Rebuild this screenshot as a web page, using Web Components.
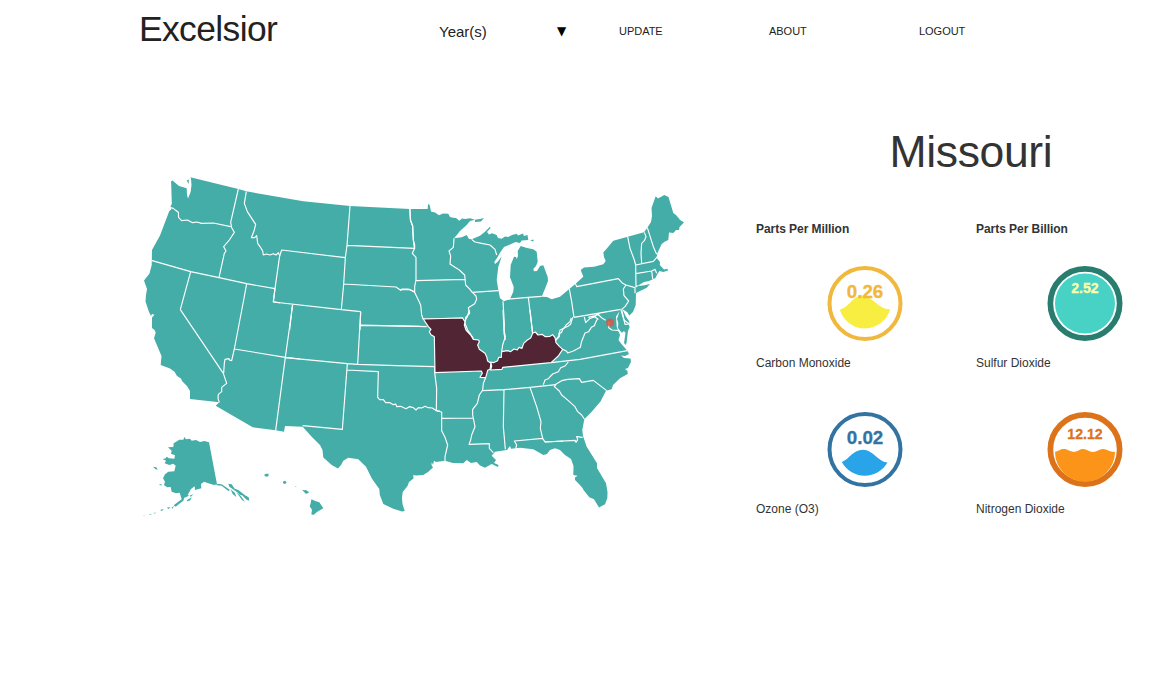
<!DOCTYPE html>
<html lang="en"><head><meta charset="utf-8"><title>Excelsior</title>
<style>html,body{margin:0;height:100%;background:#fff;overflow:hidden}body{font-family:"Liberation Sans",Arial,sans-serif;color:#333}</style></head>
<body><excelsior-app></excelsior-app>
<script>
const define=(name,html,setup)=>customElements.define(name,class extends HTMLElement{
  constructor(){super();this.attachShadow({mode:'open'});}
  connectedCallback(){const t=document.createElement('template');t.innerHTML=typeof html==='function'?html(this):html;this.shadowRoot.replaceChildren(t.content.cloneNode(true));}
});

define('nav-link',`<style>:host{display:block;width:150px;font-size:11px;line-height:14px;color:#222;letter-spacing:-.03px}</style><slot></slot>`);
define('year-select',`<style>:host{display:flex;width:180px;align-items:center;font-size:15px;line-height:18px;color:#222}
 .l{width:118px;padding-top:1px}.a{font:12px/14px "DejaVu Sans",sans-serif;color:#000}</style><span class="l"><slot></slot></span><span class="a">▼</span>`);
define('app-header',`<style>:host{display:flex;height:62px;padding-left:139px;box-sizing:border-box;align-items:center}
 h1{margin:0 0 4px;width:300px;font-weight:400;font-size:35.4px;line-height:40px;color:#222;letter-spacing:-.6px}</style>
 <h1>Excelsior</h1><year-select>Year(s)</year-select><nav-link>UPDATE</nav-link><nav-link>ABOUT</nav-link><nav-link>LOGOUT</nav-link>`);

const waves={
 co:'M-25.2 6C-17 5-12-8-3-8C7-8 15 7 25.2 5.8A26.2 26.2 0 0 1-25.2 6Z',
 o3:'M-23.2 12.5C-15 9-12 .2-2 .2C8 .2 14 13 22.5 13A26.2 26.2 0 0 1-23.2 12.5Z',
 so2:'M-30 0A30 30 0 1 1 30 0A30 30 0 1 1-30 0Z',
 no2:'M-30 2.2C-26 1.5-25-.6-21-.6C-17-.6-15 2.2-11 2.2C-7 2.2-6-.6-2-.6C2-.6 4 2.4 8 2.4C12 2.4 14-.6 18-.6C22-.6 24 2.4 30 2.4A30 30 0 0 1-30 2.2Z'};
define('liquid-gauge',el=>{const a=n=>el.getAttribute(n),w=+a('ring');return `<style>:host{display:block;width:76px;height:76px}svg{display:block}text{font-weight:bold;text-anchor:middle}</style>
 <svg width="76" height="76" viewBox="-38 -38.5 76 76"><circle r="${37.5-w/2}" fill="none" stroke="${a('color')}" stroke-width="${w}"/>
 <path d="${waves[a('wave')]}" fill="${a('fill')}"/><text x="0" y="${a('ty')}" font-size="${a('size')}" fill="${a('ink')}" stroke="${a('ink')}" stroke-width=".3">${el.textContent}</text></svg>`});
define('reading-card',`<style>:host{display:flex;flex-direction:column;height:146px;font-size:12px;line-height:14px}
 .g{padding-left:71px;height:91px}</style><div class="g"><slot name="gauge"></slot></div><slot></slot>`);
define('reading-column',`<style>:host{display:block;width:220px}h2{margin:0 0 29px;font-size:12px;line-height:14px;font-weight:bold;letter-spacing:-.05px}</style><h2><slot name="title"></slot></h2><slot></slot>`);
define('state-panel',`<style>:host{display:block;flex:none;width:440px;padding-top:64px}h1{margin:0;padding-left:133.5px;font-size:44.5px;line-height:52px;font-weight:400;height:96px;box-sizing:border-box;letter-spacing:-.35px}
 .cols{display:flex}</style><h1>Missouri</h1><div class="cols">
 <reading-column><span slot="title">Parts Per Million</span>
 <reading-card><liquid-gauge slot="gauge" ring="4" color="#f0b83c" fill="#f8ee42" ink="#f0b83c" wave="co" ty="-5.8" size="18.8">0.26</liquid-gauge>Carbon Monoxide</reading-card>
 <reading-card><liquid-gauge slot="gauge" ring="4" color="#3273a2" fill="#2aa4e8" ink="#3273a2" wave="o3" ty="-5.8" size="18.8">0.02</liquid-gauge>Ozone (O3)</reading-card></reading-column>
 <reading-column><span slot="title">Parts Per Billion</span>
 <reading-card><liquid-gauge slot="gauge" ring="5.7" color="#287d6e" fill="#48d1c5" ink="#ffffa6" wave="so2" ty="-10.6" size="14.1">2.52</liquid-gauge>Sulfur Dioxide</reading-card>
 <reading-card><liquid-gauge slot="gauge" ring="5.7" color="#dc731a" fill="#fb9419" ink="#dc731a" wave="no2" ty="-10.6" size="14.1">12.12</liquid-gauge>Nitrogen Dioxide</reading-card></reading-column></div>`);

/* Border lines are grouped by region, three units to a pixel. */
const regions=[
 [130,165,`M121,128 130,130 137,136 145,142 146,158 155,167 172,165 188,173 200,171 215,175 250,174 302,185M325,72 302,172 305,188 313,202 298,225 281,245 288,258 283,265 267,338M64,286 182,320 267,338 350,356 435,371M182,320 151,434M350,356 341,405M349,79 343,115 352,140 377,178 372,198 364,218 374,218 380,212 383,235 392,248 398,258 400,270 410,267 420,270 430,266 438,270 445,263 449,272 435,371 430,410 450,414`],
 [270,180,`M29,228 35,210 226,233M15,325 10,366 214,389 272,395M240,78 231,196 226,233 221,312 214,389M231,196 434,205M420,87 421,120 428,138 430,180 434,195 434,205 427,220 438,232 438,300 434,320 434,337M221,312 378,321 392,331 396,327 415,327 425,331 434,337M67,376 59,450M272,395 270,450M271,436 450,439`],
 [400,190,`M29,57 32,92 38,108 40,150 43,175M162,145 160,172 147,183 152,198 150,222 165,232 178,240 194,255 197,285 210,298 215,305 228,318 230,328 224,341 205,353 209,370 197,382 195,400 203,420 220,445M48,272 195,268M69,387 190,384M215,307 295,302M215,148 225,156 245,160 270,165 285,178 290,195M309,334 313,400 312,430 316,450M318,328 385,322 425,319M385,322 398,430M0,299 28,299 43,305 55,330 62,345 65,375 69,387`],
 [540,185,`M102,397 242,373M133,396 137,413 150,400 163,396 173,387 187,400 197,406M155,396 170,390 180,385M88,312 95,350 102,397M94,399 90,410 78,420 72,430 60,435 57,450M105,292 110,305 235,281 248,295 258,300 250,312 252,332 266,348 255,365 245,373M258,300 285,308 285,325M263,155 270,190 283,225 287,240 288,305 293,302M313,142 318,155 313,167 305,175 303,205 305,235M287,240 340,229 352,215M322,128 340,185 350,208M287,266 335,258 345,253 350,265M335,258 338,282M245,373 255,418 270,417M207,410 206,428 216,435 235,436 245,445`],
 [130,300,`M151,29 280,220 290,250 275,262 275,275 265,283 264,295 268,307M341,0 313,147 305,182 298,180 297,176 285,178 283,190 281,220M313,147 466,172 510,177M466,172 437,391M488,15 466,172`],
 [280,300,`M16,173 202,191 233,193 350,197 464,200M242,35 233,193M242,75 440,80M202,191 187,388 68,377M201,210 295,215 293,292 299,299 310,299 317,308 330,308 340,314 347,312 350,320 362,319 378,326 388,320 400,323 408,330 415,323 425,324 435,319 445,323 457,324 469,332 480,333M464,200 464,218 470,265 469,332`],
 [420,310,`M50,303 65,306 65,325 159,324M65,325 65,362 75,382 83,405 75,440 75,455M197,203 190,220 188,240 178,255 172,280 158,298 158,315 165,350 155,375 152,390 147,403 208,401 208,415 220,428M188,242 252,239 330,232 408,224M252,239 250,350 256,418M330,232 350,290 363,335 361,355 368,385 283,393 290,405 287,417M368,385 375,396 430,393M249,0 252,60 256,80 248,105 245,125M330,0 338,72M148,0 142,20 135,32M420,72 408,90`],
 [520,310,`M75,396 165,391 168,397 173,389 170,380 188,382M70,224 75,210 85,206 98,192 115,185 122,173 135,168 145,156M108,223 103,230 118,243 125,255 145,272 165,290 173,305 185,315 193,327M105,224 125,212 143,208 178,206 185,217 220,211 260,242M93,158 180,148 322,122M128,118 140,124 143,129 160,123 181,112 184,97 195,69 206,65 214,52 223,47 230,30 235,28M158,22 152,42 144,49 130,55 124,68 117,70 118,80 108,90M235,28 220,18 205,22M303,0 312,30 328,42M328,42 330,50`]];
define('us-map',`<style>:host{display:block;width:560px;height:350px}svg{display:block}.land{fill:#44ada8}.b{fill:none;stroke:#fff;stroke-width:1.15;stroke-linejoin:round;vector-effect:non-scaling-stroke}.b.hot{fill:#522534}</style>
<svg width="560" height="350" viewBox="140 170 560 350"><g class="land">
<path d="M190.3,177.3 238.3,189 246.3,191.3 270,195.5 303.3,201.3 350,206 410,209 427.7,209 428,204.3 429.5,204.5 431,211.5 435,212.5 439,215.3 443,213.5 448.3,213.7 450,217 453,217.7 456,218 459.3,220.7 462,218.5 465,219 470,218.3 475,219.7 470,221 466.7,225 460,231 456,236 454,238.3 461.7,237.3 466.7,235 469,239 471.7,239.3 480,235.7 485,231.7 490,226.7 490.5,228 487,232 489,234.5 492,233.2 496.7,235 498,238 501.7,238.7 505,236.5 508.3,237 512,235 516.7,233.7 518,235.5 523,233.5 524,236 527.5,235 528.3,240 521.7,240.5 520,243 515.5,242 510,244.5 504,247 500,252.7 497,258 494.3,262 495,264 498,261.5 501.7,256.5 498.3,266.7 496.7,280 498.3,290 500,298.3 504,301.3 510,299 513.3,291.7 513.7,286.7 510,277.3 510.7,265 514,256.7 516,257 516.7,259 518,256 517.7,251 520.7,246 527,248 533.3,249.3 536.7,251.7 537.7,261.7 536,266 533.3,269 534,271.3 537,271 540,266 543.3,265.3 547.7,277 548,281 545.3,288 541.7,296.7 547,297 551.7,299.3 560,296.7 569.3,289 575,284.3 583.3,276.7 580.7,270 584,267.5 594,266.7 603.3,264.3 605.7,261 604,257 603.3,252.5 608.3,246.7 613.3,240.7 627.7,236.7 644,232.3 647.3,227.7 651,222 652,216 651.5,208 655.7,196.3 658,198.5 664.3,195 668.5,197 673.3,213 676,215 679,218.5 680,220 684,222.3 682,224.5 679.5,227 679,230 676,230 673.3,233 669,232.5 668.3,240 665,241.5 661.7,244 657.3,253.3 656.7,258 660,262 659.8,265 664,269.5 667.5,268.8 668,270.6 663.3,272 659.5,271 657.3,274.3 655.5,278 649,281 644,282 637.3,286 643.3,285.5 650,284 646.7,287.7 636,293 635.7,305 633,312 629.3,315.5 627.3,312.3 622.3,309 626,316.7 629,321 630,326 628,331 627.5,335 626.7,341.7 626,345 624,343 625.5,333 624,331 621.7,333 618,328 618.3,323 617,319 619.5,311.5 616,316.5 616.7,326.7 620,335 618.5,340 621.5,344 627.3,350.7 629,354 625,356 621,355.5 624,358 630.5,358.5 631,361.7 628,368 625,369 627.5,371 627.7,374 620,378.3 613,385 611.7,389.3 606,390.7 600.5,401.5 591.7,411.7 584.3,419.3 582.3,430 583,436 586.7,446.7 597,463.3 597,468 606,483.3 607.5,492 607.3,498.3 605,504.3 599,507.5 594,499.3 589.3,497.3 583.5,490 582.5,488 579,484 575,480 575,477.5 577.7,475.7 573.3,475 573.5,466 571,459 565,455 560,450 555,448.3 550,450 547,454 543.3,455 533.3,449.3 520,447.7 511,448.7 510,446 507,450 495,451.7 491.7,455.7 496,460 494,463 498.5,465 498,467 491.7,464 485,467.8 480,465.5 476.7,462 471,463 466.7,460 463.3,463.3 453,463 445,460.7 436,462 434,460.7 433,464.8 431.7,462.3 431.5,465 433,467.5 428,472 423.3,475 416,475.5 413.3,475 413.5,478.5 409,482 407.5,486 402.7,492 402,498 402.5,504 404.7,511 402,511.5 393.3,508.7 383.3,504 379.8,495 379.3,489 375,483 371.7,478.3 366,466.7 358.3,459.3 348.3,457.7 343.3,460.7 341,465 338,468.5 331.7,465 323.3,457.5 322.5,450 320,445 311.7,436.7 302.7,426.7 285,426 284,431.7 275.7,430.3 252.7,427.3 215.7,405.7 219.3,402.3 190,399 190,391 187,386 182,381 181,378.5 177,376 174.5,371.7 170,368.5 160.7,365 161.5,356 154,338.3 155.7,332.5 154.5,330 152,328 152,317.5 154.5,314.8 152,314 151,316 149,312 145.5,301.5 146,295 147,289 144,280.5 149.5,273.5 151.7,265 152,250 160,235.5 169.3,211 171.3,209.5 170.5,206.5 171.8,204 171.3,187 171,181.5 172.5,180.5 179,186 186.7,188.3 187,195 188,198.5 190.7,191.7 191.5,185 191,178.5Z"/>
<path d="M475,219.7 480,219 484,218 481,221.5 475,222Z M186.8 180.5 189 179.5 188.5 184Z M530 240 534 239.8 533 241.5Z"/>
<g transform="translate(140 425)scale(.333333)"><path d="M133,36 138,43 150,41 155,47 168,45 180,51 193,48 207,52 231,178 222,180 205,175 192,170 183,177 184,190 165,195 164,184 153,192 143,210 147,212 133,218 130,227 120,235 107,245 101,241 115,230 125,223 119,203 108,205 95,200 92,186 81,187 72,180 75,170 69,160 75,148 85,140 103,139 107,122 100,116 88,120 74,115 78,107 68,102 77,100 80,95 87,100 103,101 105,91 93,86 95,77 84,67 100,66 101,55 112,48 118,44 130,44Z M39,125 49,127 53,134 47,133Z M56,178 65,178 64,182Z M140,226 155,217 151,226 143,229Z M148,212 160,208 153,215Z M228,176 245,178 270,195 265,198 245,182 231,181Z M265,176 275,178 284,191 295,195 315,211 326,217 328,227 320,224 306,211 300,210 292,202 283,196 268,185Z M272,193 285,204 289,216 278,207Z M288,200 303,214 315,230 306,225 298,214Z M94,248 103,243 97,251Z M80,248 91,246 86,252Z M60,255 71,252 66,258Z"/>
<path opacity=".6" d="M40,264 49,262 44,267Z M26,268 36,266 31,271Z M8,273 17,270 12,273Z"/>
<path d="M372,150 378,146 386,146 385,154 378,155Z M430,169 436,167 440,174 433,177 429,174Z M464,183 471,185 466,185Z M486,194 493,196 498,195 508,202 498,207Z M514,223 528,229 538,232 550,250 532,260 520,270 514,268 516,254 509,244 512,235Z"/></g></g>
${regions.map(([x,y,d])=>`<path class="b" transform="translate(${x} ${y})scale(.333333)" d="${d}"/>`).join('')}
<g transform="translate(420 310)scale(.333333)"><path class="b hot" d="M10,27 127,24 135,35 133,45 138,60 152,75 160,88 176,90 178,95 173,105 178,118 195,130 200,140 203,153 213,160 210,178 203,181 197,203 180,202 187,190 184,183 45,188 43,80 33,74 28,65 33,58 25,50Z"/>
<path class="b hot" d="M212,180 215,168 212,156 220,158 233,152 236,142 244,142 245,125 262,122 272,125 282,117 292,120 297,112 306,115 311,100 322,90 332,84 338,70 346,66 354,75 366,73 376,80 390,79 398,74 405,83 408,98 418,109 428,118 415,138 393,158 248,172 246,178 212,180Z"/></g>
<circle cx="610.2" cy="322.6" r="4" fill="#e0533f" opacity=".82"/></svg>`);
define('excelsior-app',`<style>:host{display:block}main{display:flex}.map{flex:none;width:616px;padding:108px 0 0 140px;box-sizing:content-box}</style>
<app-header></app-header><main><div class="map"><us-map></us-map></div><state-panel></state-panel></main>`);
</script></body></html>
